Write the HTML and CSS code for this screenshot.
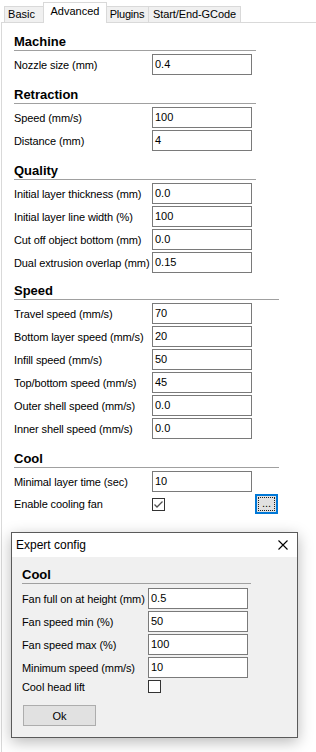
FILE: index.html
```html
<!DOCTYPE html>
<html>
<head>
<meta charset="utf-8">
<link rel="stylesheet" href="styles.css">
</head>
<body>
<div class="tabs">
  <div class="tab tab-basic">Basic</div>
  <div class="tab tab-advanced active">Advanced</div>
  <div class="tab tab-plugins">Plugins</div>
  <div class="tab tab-gcode">Start/End-GCode</div>
</div>
<div class="panel">
  <section class="group">
    <h2 class="group-title">Machine</h2>
    <div class="rows">
      <span class="label">Nozzle size (mm)</span><div class="field">0.4</div>
    </div>
  </section>
  <section class="group">
    <h2 class="group-title">Retraction</h2>
    <div class="rows">
      <span class="label">Speed (mm/s)</span><div class="field">100</div>
      <span class="label">Distance (mm)</span><div class="field">4</div>
    </div>
  </section>
  <section class="group">
    <h2 class="group-title">Quality</h2>
    <div class="rows">
      <span class="label">Initial layer thickness (mm)</span><div class="field">0.0</div>
      <span class="label">Initial layer line width (%)</span><div class="field">100</div>
      <span class="label">Cut off object bottom (mm)</span><div class="field">0.0</div>
      <span class="label">Dual extrusion overlap (mm)</span><div class="field">0.15</div>
    </div>
  </section>
  <section class="group group-speed">
    <h2 class="group-title wide">Speed</h2>
    <div class="rows">
      <span class="label">Travel speed (mm/s)</span><div class="field">70</div>
      <span class="label">Bottom layer speed (mm/s)</span><div class="field">20</div>
      <span class="label">Infill speed (mm/s)</span><div class="field">50</div>
      <span class="label">Top/bottom speed (mm/s)</span><div class="field">45</div>
      <span class="label">Outer shell speed (mm/s)</span><div class="field">0.0</div>
      <span class="label">Inner shell speed (mm/s)</span><div class="field">0.0</div>
    </div>
  </section>
  <section class="group">
    <h2 class="group-title wide">Cool</h2>
    <div class="rows">
      <span class="label">Minimal layer time (sec)</span><div class="field">10</div>
      <span class="label">Enable cooling fan</span>
      <div class="check-cell">
        <span class="checkbox"><svg width="11" height="11" viewBox="0 0 11 11"><polyline points="1.5,5.5 4,8 9.5,2.5" fill="none" stroke="#505050" stroke-width="1.3"/></svg></span>
        <button class="more-btn"><span class="focus-ring">...</span></button>
      </div>
    </div>
  </section>
</div>

<div class="dialog">
  <div class="dialog-title">
    <span>Expert config</span>
    <svg class="close" width="10" height="10" viewBox="0 0 10 10"><path d="M0.5 0.5 L9.5 9.5 M9.5 0.5 L0.5 9.5" stroke="#000" stroke-width="1.1" fill="none"/></svg>
  </div>
  <div class="dialog-body">
    <h2 class="group-title dialog-heading">Cool</h2>
    <div class="rows dialog-rows">
      <span class="label">Fan full on at height (mm)</span><div class="field">0.5</div>
      <span class="label">Fan speed min (%)</span><div class="field">50</div>
      <span class="label">Fan speed max (%)</span><div class="field">100</div>
      <span class="label">Minimum speed (mm/s)</span><div class="field">10</div>
      <span class="label">Cool head lift</span><div class="check-cell"><span class="checkbox"></span></div>
    </div>
    <button class="ok-btn">Ok</button>
  </div>
</div>
</body>
</html>
```
FILE: styles.css
```css
* { box-sizing: border-box; }

html, body {
  margin: 0;
  padding: 0;
}

body {
  width: 316px;
  height: 752px;
  overflow: hidden;
  position: relative;
  background: #fff;
  font-family: "Liberation Sans", Arial, sans-serif;
  font-size: 11px;
  color: #000;
}

/* Tabs */
.tabs {
  display: flex;
  align-items: flex-end;
  height: 23px;
  padding-left: 3px;
  margin-left: 1px;
  border-bottom: 1px solid #d9d9d9;
}

.tab {
  height: 16px;
  line-height: 14px;
  border: 1px solid #d9d9d9;
  border-bottom: none;
  background: #f0f0f0;
  text-align: center;
  white-space: nowrap;
  position: relative;
}

.tab + .tab { margin-left: -1px; }

.tab-basic { width: 41px; padding-right: 6px; }
.tab-advanced { width: 64px; }
.tab-plugins { width: 44px; letter-spacing: -0.2px; }
.tab-gcode { width: 93px; letter-spacing: -0.1px; }

.tab.active {
  height: 21px;
  margin-bottom: -1px;
  background: #fff;
  line-height: 15px;
  padding-top: 1px;
  z-index: 1;
  margin-left: -2px;
  margin-right: -2px;
}

.tab.active + .tab { margin-left: 0; }

/* Panel */
.panel {
  margin-left: 1px;
  border-left: 1px solid #d9d9d9;
  height: 729px;
  padding: 11px 0 0 12px;
}

.group + .group { margin-top: 12px; }
.group-speed { margin-top: 10px !important; }

.group-title {
  margin: 0 0 3px;
  width: 242px;
  font-size: 13px;
  font-weight: bold;
  line-height: 16px;
  border-bottom: 1px solid #a0a0a0;
}

.group-title.wide { width: 265px; }

.rows {
  display: grid;
  grid-template-columns: 138px 100px;
  row-gap: 2px;
  align-items: center;
}

.label {
  white-space: nowrap;
  letter-spacing: -0.1px;
}

.field {
  height: 21px;
  border: 1px solid #7a7a7a;
  background: #fff;
  padding: 1px 0 0 2px;
  line-height: 17px;
}

.check-cell {
  display: flex;
  align-items: center;
}

.checkbox {
  width: 13px;
  height: 13px;
  border: 1px solid #333;
  background: #fff;
  display: flex;
  align-items: center;
  justify-content: center;
  flex: none;
}

.checkbox svg { display: block; }

.more-btn {
  margin: 0 0 0 90px;
  width: 23px;
  height: 20px;
  padding: 1px;
  border: 2px solid #0078d7;
  background: #e1e1e1;
  font-family: inherit;
  font-size: 11px;
  flex: none;
  display: flex;
}

.focus-ring {
  flex: 1;
  border: 1px dotted #222;
  line-height: 10px;
  text-align: center;
  color: #000;
}

/* Dialog overlay */
.dialog {
  position: absolute;
  left: 11px;
  top: 532px;
  width: 287px;
  height: 206px;
  border: 1px solid #5a5a5a;
  background: #f0f0f0;
  box-shadow: 0 4px 14px rgba(0, 0, 0, 0.28);
}

.dialog-title {
  height: 24px;
  background: #fff;
  display: flex;
  align-items: center;
  justify-content: space-between;
  padding: 0 9px 0 4px;
  font-size: 12px;
  line-height: 15px;
}

.close { display: block; }

.dialog-body {
  padding: 10px 10px 0 10px;
}

.dialog-heading {
  width: 229px;
  margin-bottom: 4px;
}

.dialog-rows {
  grid-template-columns: 126px 100px;
}

.dialog-rows .check-cell { height: 13px; }

.ok-btn {
  display: block;
  margin: 12px 0 0 1px;
  width: 73px;
  height: 21px;
  border: 1px solid #adadad;
  background: #e1e1e1;
  font-family: inherit;
  font-size: 11px;
  color: #000;
  padding: 0;
}
```
